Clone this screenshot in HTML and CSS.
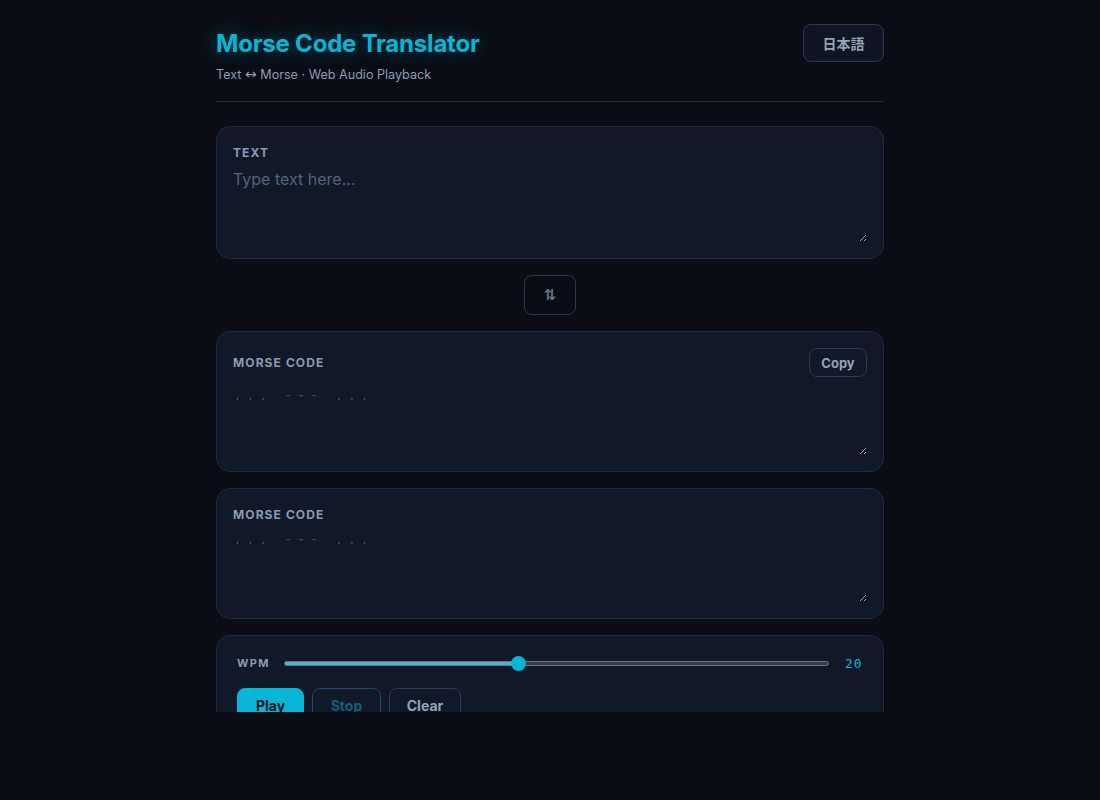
FILE: index.html
```html
<!DOCTYPE html>
<html lang="en">
<head>
<meta charset="utf-8">
<title>Morse Code Translator</title>
<link rel="stylesheet" href="styles.css">
</head>
<body>
<div class="app">
  <main class="container">
    <header class="header">
      <div class="brand">
        <h1 class="title">Morse Code Translator</h1>
        <p class="subtitle">Text <span class="arrow">↔</span> Morse · Web Audio Playback</p>
      </div>
      <button class="btn btn-outline lang-btn" type="button">日本語</button>
    </header>

    <section class="card">
      <label class="label" for="text-in">Text</label>
      <textarea id="text-in" class="field field-text" placeholder="Type text here..."></textarea>
    </section>

    <div class="swap-row">
      <button class="btn btn-outline swap-btn" type="button" aria-label="Swap">⇅</button>
    </div>

    <section class="card">
      <div class="card-head">
        <label class="label" for="morse-out">Morse Code</label>
        <button class="btn btn-outline copy-btn" type="button">Copy</button>
      </div>
      <textarea id="morse-out" class="field field-morse morse-a" placeholder="... --- ..."></textarea>
    </section>

    <section class="card">
      <label class="label" for="morse-in">Morse Code</label>
      <textarea id="morse-in" class="field field-morse morse-b" placeholder="... --- ..."></textarea>
    </section>

    <section class="card controls">
      <div class="wpm-row">
        <span class="label">WPM</span>
        <input class="range" type="range" min="5" max="40" value="20" style="--fill: 43%">
        <span class="wpm-value">20</span>
      </div>
      <div class="actions">
        <button class="btn btn-play" type="button">Play</button>
        <button class="btn btn-stop" type="button" disabled>Stop</button>
        <button class="btn btn-outline btn-clear" type="button">Clear</button>
      </div>
    </section>
  </main>
</div>
</body>
</html>
```

FILE: styles.css
```css
* {
  box-sizing: border-box;
}

html,
body {
  margin: 0;
  padding: 0;
  background: #0a0d15;
}

body {
  font-family: Inter, "Noto Sans", "Noto Sans CJK JP", sans-serif;
  color: #cbd5e1;
}

.app {
  height: 712px;
  overflow: hidden;
}

.container {
  width: 668px;
  margin: 0 auto;
  padding-top: 24px;
}

/* header */
.header {
  display: flex;
  justify-content: space-between;
  align-items: flex-start;
  padding-bottom: 18px;
  border-bottom: 1px solid #1f2a3c;
  margin-bottom: 24px;
}

.title {
  margin: 6px 0 0;
  font-size: 24px;
  line-height: 28px;
  font-weight: 700;
  color: #06b6d4;
  letter-spacing: -0.2px;
  text-shadow: 0 0 18px rgba(6, 182, 212, 0.45);
}

.subtitle {
  margin: 9px 0 0;
  height: 16px;
  font-size: 12.6px;
  line-height: 16px;
  color: #8a9bb4;
}

.arrow {
  font-family: "DejaVu Sans", sans-serif;
  font-size: 14px;
  line-height: 1;
}

/* buttons */
.btn {
  font-family: inherit;
  font-weight: 700;
  border-radius: 8px;
  cursor: pointer;
  background: transparent;
}

.btn-outline {
  border: 1px solid #2a3a52;
  color: #94a3b8;
  background: #0f1522;
}

.lang-btn {
  width: 81px;
  height: 38px;
  font-size: 14px;
  font-family: "Noto Sans CJK JP", Inter, sans-serif;
}

.swap-row {
  display: flex;
  justify-content: center;
  margin: 16px 0;
}

.swap-btn {
  width: 52px;
  height: 40px;
  font-size: 15px;
  color: #64748b;
  background: transparent;
  font-family: "DejaVu Sans", sans-serif;
}

.copy-btn {
  width: 58px;
  height: 29px;
  font-size: 13px;
  background: transparent;
}

/* cards */
.card {
  background: #111827;
  border: 1px solid #1f2a3c;
  border-radius: 14px;
  padding: 16px;
  margin-bottom: 16px;
  display: flex;
  flex-direction: column;
}

.card-head {
  display: flex;
  justify-content: space-between;
  align-items: center;
  height: 29px;
  margin-bottom: 8px;
}

.card > .label {
  line-height: 19px;
  margin-bottom: 5px;
}

.label {
  display: block;
  font-size: 12px;
  line-height: 16px;
  font-weight: 700;
  letter-spacing: 1.1px;
  text-transform: uppercase;
  color: #8a9bb4;
}

.field {
  display: block;
  width: 100%;
  margin: 0;
  padding: 0;
  border: none;
  outline: none;
  background: transparent;
  color: #cbd5e1;
  resize: vertical;
}

.field-text {
  height: 75px;
  font-family: Inter, sans-serif;
  font-size: 16px;
  line-height: 24px;
}

.field-text::placeholder {
  color: #52647f;
}

.field-morse {
  font-family: "Liberation Mono", monospace;
  font-size: 15px;
  line-height: 24px;
  letter-spacing: 3.7px;
}

.field-morse::placeholder {
  color: #3d4b62;
}

.morse-a {
  height: 70px;
}

.morse-b {
  height: 73px;
}

/* playback controls */
.controls {
  padding: 19px 20px 20px;
}

.wpm-row {
  display: flex;
  align-items: center;
  gap: 14px;
  height: 16px;
}

.wpm-row .label {
  font-size: 11px;
  letter-spacing: 1.4px;
}

.range {
  flex: 1;
  margin: 0;
  height: 16px;
  -webkit-appearance: none;
  appearance: none;
  background: transparent;
}

.range::-webkit-slider-runnable-track {
  height: 5px;
  border-radius: 3px;
  border: 1px solid #6b7280;
  background: linear-gradient(to right, #4fb3cf 0, #4fb3cf var(--fill), #3a3f47 var(--fill), #3a3f47 100%);
}

.range::-webkit-slider-thumb {
  -webkit-appearance: none;
  width: 15px;
  height: 15px;
  margin-top: -6px;
  border-radius: 50%;
  background: #06b6d4;
  border: none;
}

.wpm-value {
  margin-left: 2px;
  width: 18px;
  font-family: "DejaVu Sans Mono", monospace;
  font-size: 13px;
  color: #06b6d4;
  letter-spacing: 1px;
}

.actions {
  display: flex;
  gap: 8px;
  margin-top: 17px;
}

.actions .btn {
  height: 34px;
  font-size: 14px;
  padding: 0 16px;
}

.btn-play {
  width: 67px;
  border: 1px solid #06b6d4;
  background: #06b6d4;
  color: #0b1220;
}

.btn-stop {
  width: 69px;
  border: 1px solid #164e63;
  color: #155e75;
  background: transparent;
}

.btn-clear {
  width: 72px;
  background: transparent;
}
```
